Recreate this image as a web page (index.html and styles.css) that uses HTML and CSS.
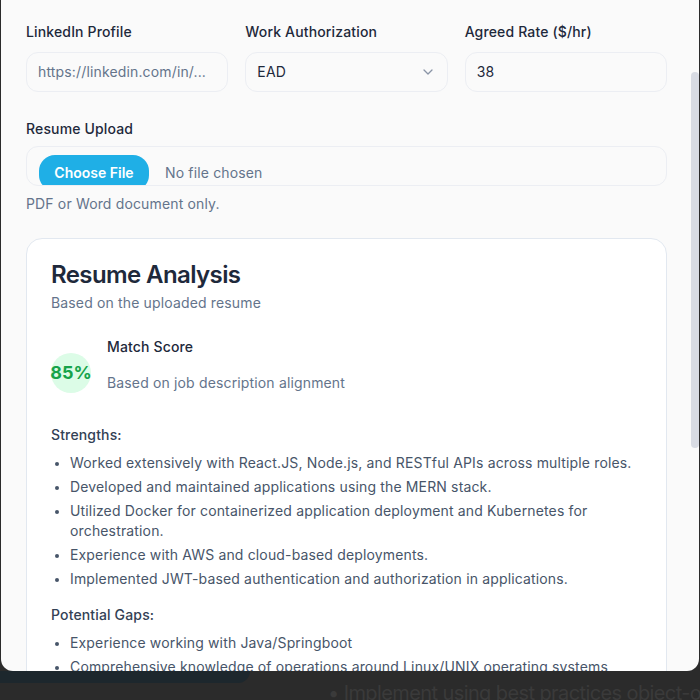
FILE: index.html
```html
<!DOCTYPE html>
<html>
<head>
<meta charset="utf-8">
<link rel="stylesheet" href="styles.css">
</head>
<body>
<div class="modal">
  <div class="modal-body">
    <div class="field-grid">
      <div class="field">
        <label class="label">LinkedIn Profile</label>
        <div class="input placeholder">https://linkedin.com/in/...</div>
      </div>
      <div class="field">
        <label class="label">Work Authorization</label>
        <div class="input select">
          <span>EAD</span>
          <svg class="chevron" width="16" height="16" viewBox="0 0 16 16"><path d="M4 6l4 4 4-4" fill="none" stroke="#8a94a6" stroke-width="1.3" stroke-linecap="round" stroke-linejoin="round"/></svg>
        </div>
      </div>
      <div class="field">
        <label class="label">Agreed Rate ($/hr)</label>
        <div class="input">38</div>
      </div>
    </div>

    <div class="field upload-field">
      <label class="label">Resume Upload</label>
      <div class="file-box">
        <span class="file-btn">Choose File</span>
        <span class="file-none">No file chosen</span>
      </div>
      <p class="hint">PDF or Word document only.</p>
    </div>

    <div class="card">
      <h2 class="card-title">Resume Analysis</h2>
      <p class="card-sub">Based on the uploaded resume</p>

      <div class="score-row">
        <div class="score-circle">85%</div>
        <div class="score-text">
          <div class="score-label">Match Score</div>
          <div class="score-desc">Based on job description alignment</div>
        </div>
      </div>

      <h3 class="section-title strengths">Strengths:</h3>
      <ul class="list">
        <li>Worked extensively with React.JS, Node.js, and RESTful APIs across multiple roles.</li>
        <li>Developed and maintained applications using the MERN stack.</li>
        <li>Utilized Docker for containerized application deployment and Kubernetes for orchestration.</li>
        <li>Experience with AWS and cloud-based deployments.</li>
        <li>Implemented JWT-based authentication and authorization in applications.</li>
      </ul>

      <h3 class="section-title gaps">Potential Gaps:</h3>
      <ul class="list">
        <li>Experience working with Java/Springboot</li>
        <li>Comprehensive knowledge of operations around Linux/UNIX operating systems</li>
      </ul>
    </div>
  </div>
  <div class="scroll-thumb"></div>
</div>
<div class="behind">
  <div class="behind-side"></div>
  <div class="behind-text">• Implement using best practices object-ori</div>
</div>
</body>
</html>
```
FILE: styles.css
```css
* { box-sizing: border-box; }
html, body {
  margin: 0;
  padding: 0;
}
body {
  width: 700px;
  height: 700px;
  overflow: hidden;
  background: #2b2b2b;
  font-family: Inter, "Liberation Sans", sans-serif;
  font-size: 14px;
  line-height: 20px;
  letter-spacing: 0.15px;
  color: #1e293b;
}
.modal {
  position: relative;
  margin-left: 1px;
  width: 698px;
  height: 671px;
  background: #fafafa;
  border-radius: 0 0 12px 12px;
  overflow: hidden;
}
.modal-body {
  padding: 22px 32px 0 25px;
}
.field-grid {
  display: grid;
  grid-template-columns: repeat(3, 1fr);
  column-gap: 17px;
}
.field {
  display: flex;
  flex-direction: column;
}
.label {
  font-weight: 500;
  color: #1e293b;
  margin-bottom: 10px;
}
.input {
  height: 40px;
  border: 1px solid #eceef3;
  border-radius: 12px;
  padding: 0 11px;
  display: flex;
  align-items: center;
  color: #1e293b;
  background: #fafafa;
}
.placeholder { color: #64748b; }
.select { justify-content: space-between; }

.upload-field { margin-top: 27px; }
.upload-field .label { margin-bottom: 7px; }
.file-box {
  height: 40px;
  border: 1px solid #eceef3;
  border-radius: 12px;
  overflow: hidden;
  display: flex;
  align-items: flex-start;
  padding: 8px 12px 0;
}
.file-btn {
  flex: none;
  height: 36px;
  width: 110px;
  border-radius: 16px;
  background: #1fafe6;
  color: #fff;
  font-weight: 600;
  letter-spacing: 0;
  display: flex;
  align-items: center;
  justify-content: center;
}
.file-none {
  margin-left: 16px;
  color: #64748b;
  line-height: 36px;
}
.hint {
  margin: 8px 0 0;
  color: #64748b;
}

.card {
  margin-top: 24px;
  background: #fff;
  border: 1px solid #e2e8f0;
  border-radius: 16px;
  padding: 20px 24px 24px;
}
.card-title {
  margin: 0;
  font-size: 24px;
  line-height: 32px;
  font-weight: 600;
  letter-spacing: -0.6px;
  color: #1e293b;
}
.card-sub {
  margin: 2px 0 0;
  color: #64748b;
}
.score-row {
  margin-top: 24px;
  display: flex;
  align-items: flex-end;
  gap: 16px;
}
.score-circle {
  flex: none;
  width: 40px;
  height: 40px;
  border-radius: 50%;
  background: #dcfce7;
  color: #16a34a;
  font-weight: 700;
  font-size: 18px;
  letter-spacing: 0;
  display: flex;
  align-items: center;
  justify-content: center;
  white-space: nowrap;
}
.score-label {
  font-weight: 500;
  color: #1e293b;
}
.score-desc {
  margin-top: 16px;
  color: #64748b;
}
.section-title {
  margin: 0;
  font-size: 14px;
  line-height: 20px;
  font-weight: 500;
  color: #334155;
}
.strengths { margin-top: 32px; }
.gaps { margin-top: 16px; }
.list {
  margin: 8px 0 0;
  padding-left: 19px;
  color: #475569;
}
.list li + li { margin-top: 4px; }
.list li::marker { font-size: 12px; }

.scroll-thumb {
  position: absolute;
  right: 0;
  top: 72px;
  width: 8px;
  height: 376px;
  border-radius: 4px;
  background: #d8dbe3;
}

.behind {
  display: flex;
  height: 29px;
  overflow: hidden;
}
.behind-side {
  flex: none;
  width: 250px;
  height: 12px;
  background: #1d272d;
  border-bottom-right-radius: 12px;
}
.behind-text {
  flex: 1;
  min-width: 0;
  overflow: hidden;
  margin-left: 78px;
  margin-top: 9px;
  font-size: 20px;
  line-height: 26px;
  letter-spacing: -0.6px;
  color: #3a3a3a;
  white-space: nowrap;
}
```
